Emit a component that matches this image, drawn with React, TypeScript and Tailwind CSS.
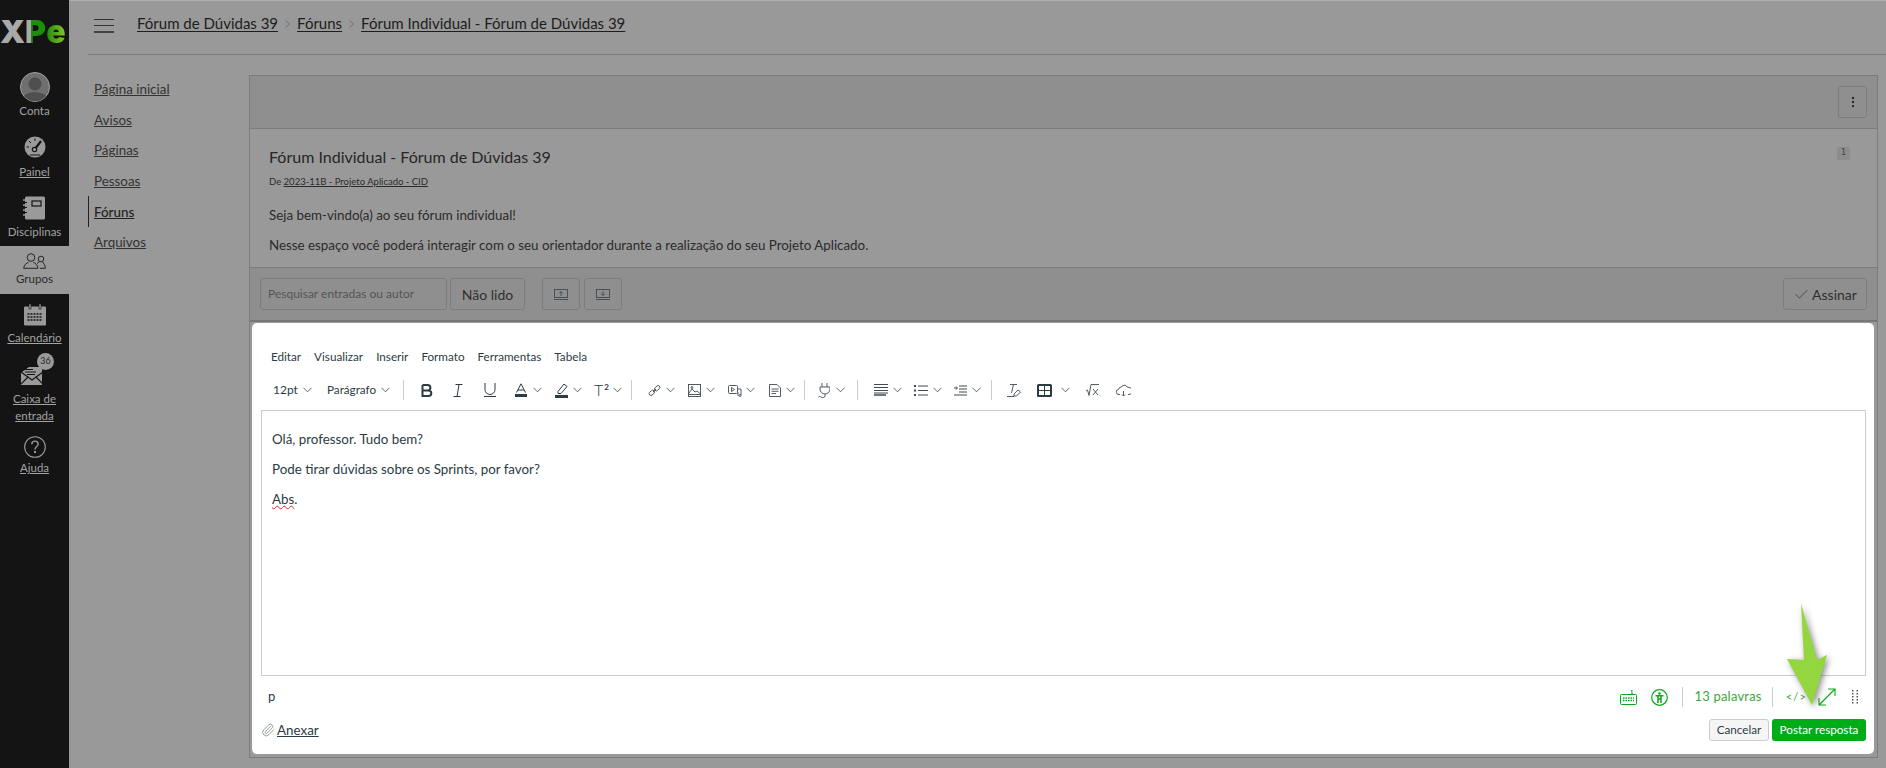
import React from "react";
import { Check, EllipsisVertical, Paperclip } from "lucide-react";

const Chevron = ({ className = "" }: { className?: string }) => (
  <svg width="9" height="6" viewBox="0 0 9 6" fill="none" stroke="#4a5560" strokeWidth="0.9" className={`shrink-0 ${className}`}>
    <path d="M0.5 0.8 L4.5 4.8 L8.5 0.8" />
  </svg>
);

const Sep = ({ className = "" }: { className?: string }) => <div className={`w-px h-5 shrink-0 bg-[#c7cdd1] ${className}`} />;

const Ico = ({ w = 16, h = 16, children, className = "", sw = 1 }: { w?: number; h?: number; children: React.ReactNode; className?: string; sw?: number }) => (
  <svg width={w} height={h} viewBox={`0 0 ${w} ${h}`} fill="none" stroke="#3f4a52" strokeWidth={sw} className={`shrink-0 ${className}`}>
    {children}
  </svg>
);

const Crumb = () => (
  <svg width="5" height="8" viewBox="0 0 5 8" fill="none" stroke="#666" strokeWidth="0.8" className="mx-[7px] mt-[2px]">
    <path d="M0.5 0.5 L4.3 4 L0.5 7.5" />
  </svg>
);

function NavIcon({ name }: { name: string }) {
  const c = "#9a9a9a";
  if (name === "painel")
    return (
      <svg width="22" height="22" viewBox="0 0 22 22">
        <circle cx="11" cy="11" r="10.5" fill={c} />
        <path d="M11 13 L17 5" stroke="#141414" strokeWidth="2.2" />
        <circle cx="10.5" cy="13.5" r="2.2" fill="#9a9a9a" stroke="#141414" strokeWidth="1.2" />
        <path d="M11 2.5v2.5M5 5l2 2M2.5 11h2.5M6 19h10" stroke="#141414" strokeWidth="1" />
      </svg>
    );
  if (name === "disciplinas")
    return (
      <svg width="23" height="24" viewBox="0 0 23 24">
        <rect x="2" y="0.5" width="20" height="23" rx="1.5" fill={c} />
        <rect x="9" y="5" width="9" height="5" fill={c} stroke="#141414" strokeWidth="1.2" />
        <path d="M0 4h4M0 9h4M0 14h4M0 19h4" stroke={c} strokeWidth="1.6" />
        <path d="M0 6.5h4M0 11.5h4M0 16.5h4" stroke="#141414" strokeWidth="1" />
      </svg>
    );
  if (name === "grupos")
    return (
      <svg width="23" height="16" viewBox="0 0 23 16" fill="none" stroke="#262626" strokeWidth="1">
        <circle cx="8" cy="4.5" r="3.8" />
        <path d="M0.7 15.3c0-3.5 3-5 4.8-6.2M15 15.3c0-3.5-3-5-4.8-6.2M0.7 15.3h14.3" />
        <circle cx="18" cy="6" r="2.8" />
        <path d="M14 10.5c1-1 2-1.3 2.5-1.8M22.3 15.3c0-3-1.6-5-2.8-6.5M17 15.3h5.3" />
      </svg>
    );
  if (name === "calendario")
    return (
      <svg width="22" height="22" viewBox="0 0 22 22">
        <rect x="0" y="2.5" width="22" height="19" rx="1" fill={c} />
        <rect x="5" y="0" width="2" height="5" fill={c} stroke="#141414" strokeWidth="0.6" />
        <rect x="15" y="0" width="2" height="5" fill={c} stroke="#141414" strokeWidth="0.6" />
        <path d="M3.5 10h15M3.5 13h15M3.5 16h15" stroke="#141414" strokeWidth="1.6" strokeDasharray="2 1" />
      </svg>
    );
  if (name === "caixa")
    return (
      <svg width="22" height="24" viewBox="0 0 22 24">
        <path d="M1 11 L8 6 H21 V24 H0 V11Z" fill={c} />
        <path d="M0 11 L11 19 L22 11M0 23 L7.5 15.5M22 23 L14.5 15.5" stroke="#141414" strokeWidth="1.2" fill="none" />
        <path d="M4 8.5h8M4 11h11M6 13.5h8" stroke="#141414" strokeWidth="1" />
      </svg>
    );
  return (
    <svg width="22" height="22" viewBox="0 0 22 22" fill="none" stroke={c} strokeWidth="1.1">
      <circle cx="11" cy="11" r="10.3" />
      <path d="M7.8 8.2c0-4 6.4-4 6.4-0.2 0 2.6-3.2 2.6-3.2 5.4" strokeWidth="1.4" />
      <circle cx="11" cy="16" r="0.6" fill={c} />
    </svg>
  );
}

function Sidebar() {
  return (
    <aside className="w-[69px] shrink-0 bg-[#141414] flex flex-col items-center text-[11.5px] leading-4 text-[#a3a3a3] h-[768px]">
      <div className="h-[66px] w-full pt-[13px] flex text-[32px] leading-[38px] font-black font-['Inter',sans-serif] overflow-hidden">
        <span className="text-[#a9a9a9] w-[25px] text-center shrink-0">X</span>
        <span className="bg-linear-to-r from-[#a9a9a9] from-30% to-[#1a8f0a] to-30% bg-clip-text text-transparent w-[21px] shrink-0">P</span>
        <span className="bg-linear-to-r from-[#128a08] to-[#86c62b] bg-clip-text text-transparent w-[20px] shrink-0 text-center">e</span>
      </div>
      <div className="h-[59px] w-full pt-[6px] flex flex-col items-center">
        <svg width="30" height="30" viewBox="0 0 30 30">
          <circle cx="15" cy="15" r="14.5" fill="#6f6f6f" stroke="#a3a3a3" />
          <circle cx="15" cy="12" r="6.5" fill="#4f4f4f" />
          <path d="M4 24c4-5 18-5 22 0a14 14 0 0 1-22 0Z" fill="#4f4f4f" />
        </svg>
        <span className="mt-[1px]">Conta</span>
      </div>
      <div className="h-[61px] w-full pt-[11px] flex flex-col items-center">
        <NavIcon name="painel" />
        <span className="mt-[6px] underline">Painel</span>
      </div>
      <div className="h-[60px] w-full pt-[10px] flex flex-col items-center">
        <NavIcon name="disciplinas" />
        <span className="mt-[4px]">Disciplinas</span>
      </div>
      <div className="h-[48px] w-full pt-[7px] flex flex-col items-center bg-[#999999] text-[#2a2a2a]">
        <NavIcon name="grupos" />
        <span className="mt-[2px]">Grupos</span>
      </div>
      <div className="h-[53px] w-full pt-[10px] flex flex-col items-center">
        <NavIcon name="calendario" />
        <span className="mt-[4px] underline">Calendário</span>
      </div>
      <div className="h-[80px] w-full pt-[6px] flex flex-col items-center relative">
        <div className="pt-[8px] pr-[5px]">
          <NavIcon name="caixa" />
        </div>
        <span className="absolute left-[37px] top-[6px] w-[17px] h-[17px] rounded-full bg-[#9a9a9a] text-[#262626] text-[9px] leading-[15px] text-center">
          36
        </span>
        <span className="mt-[5px] text-center leading-[17px] underline">
          Caixa de
          <br />
          entrada
        </span>
      </div>
      <div className="w-full pt-[9px] flex flex-col items-center">
        <NavIcon name="ajuda" />
        <span className="mt-[2px] underline">Ajuda</span>
      </div>
    </aside>
  );
}

function Header() {
  return (
    <header className="h-[54px] ml-[19px] border-b border-[#7c7c7c] flex items-start pt-[14px] text-[#1d1d1d]">
      <div className="w-[20px] ml-[6px] mt-[4px] flex flex-col gap-[5px]">
        <div className="h-px bg-[#333]" />
        <div className="h-px bg-[#333]" />
        <div className="h-[2px] bg-[#444]" />
      </div>
      <nav className="ml-[23px] flex items-center text-[15px] leading-4 underline underline-offset-2">
        <span>Fórum de Dúvidas 39</span>
        <Crumb />
        <span>Fóruns</span>
        <Crumb />
        <span>Fórum Individual - Fórum de Dúvidas 39</span>
      </nav>
    </header>
  );
}

function SectionNav() {
  const links = ["Página inicial", "Avisos", "Páginas", "Pessoas", "Fóruns", "Arquivos"];
  return (
    <nav className="w-[180px] shrink-0 pl-[20px] pt-[19px] flex flex-col text-[13.4px] leading-[20px] text-[#333]">
      {links.map((l) => (
        <span
          key={l}
          className={`h-[30.6px] flex items-center underline ${l === "Fóruns" ? "border-l border-[#222] -ml-[1px] pl-[5px] text-[#222] font-medium" : "pl-[5px]"}`}
        >
          {l}
        </span>
      ))}
    </nav>
  );
}

const GreyButton = ({ className = "", children }: { className?: string; children: React.ReactNode }) => (
  <div className={`h-[32px] border border-[#7d7d7d] rounded-[3px] flex items-center justify-center text-[#2f2f2f] ${className}`}>{children}</div>
);

function ForumIntro() {
  return (
    <>
      <div className="h-[53px] shrink-0 bg-[#8f8f8f] border-b border-[#7c7c7c] flex justify-end items-start pt-[10px] pr-[10px]">
        <GreyButton className="w-[29px]">
          <EllipsisVertical size={14} color="#2a2a2a" strokeWidth={2} />
        </GreyButton>
      </div>
      <div className="h-[138px] shrink-0 pl-[19px] pr-[27px] relative text-[#2b2b2b]">
        <h1 className="pt-[16px] text-[16px] leading-[24px] font-normal text-[#262626]">Fórum Individual - Fórum de Dúvidas 39</h1>
        <p className="mt-[6px] text-[9.5px] leading-[14px]">
          De <span className="underline">2023-11B - Projeto Aplicado - CID</span>
        </p>
        <p className="mt-[16px] text-[13.35px] leading-[20px]">Seja bem-vindo(a) ao seu fórum individual!</p>
        <p className="mt-[10px] text-[13.35px] leading-[20px]">Nesse espaço você poderá interagir com o seu orientador durante a realização do seu Projeto Aplicado.</p>
        <span className="absolute right-[27px] top-[18px] w-[13px] h-[13px] bg-[#8d8d8d] rounded-[2px] text-[8px] leading-[11px] text-center font-['DejaVu_Sans_Mono',monospace] text-[#3c3c3c]">
          1
        </span>
      </div>
      <div className="h-[55px] shrink-0 bg-[#8f8f8f] border-t border-b-2 border-t-[#7c7c7c] border-b-[#777] flex items-start pt-[10px] pl-[10px] pr-[10px]">
        <div className="w-[187px] h-[32px] border border-[#7d7d7d] rounded-[3px] flex items-center pl-[7px] text-[12px] text-[#555]">Pesquisar entradas ou autor</div>
        <GreyButton className="w-[75px] ml-[3px] text-[14px]">Não lido</GreyButton>
        <GreyButton className="w-[38px] ml-[17px]">
          <Ico w={14} h={11} sw={0.9}>
            <rect x="0.5" y="0.5" width="13" height="8" />
            <path d="M0 10.5h14M7 7V2.5M5 4.5l2-2 2 2" />
          </Ico>
        </GreyButton>
        <GreyButton className="w-[38px] ml-[4px]">
          <Ico w={14} h={11} sw={0.9}>
            <rect x="0.5" y="0.5" width="13" height="8" />
            <path d="M0 10.5h14M7 2v4.5M5 4.5l2 2 2-2" />
          </Ico>
        </GreyButton>
        <GreyButton className="w-[84px] ml-auto gap-[2px] text-[14px]">
          <Check size={17} color="#333" strokeWidth={1} />
          Assinar
        </GreyButton>
      </div>
    </>
  );
}

function EditorToolbar() {
  return (
    <div className="flex items-center h-[26px] pl-[12px] text-[12px] text-[#2d3b45]">
      <span className="w-[23px] shrink-0">12pt</span>
      <Chevron className="ml-[7px]" />
      <span className="w-[49px] ml-[15px] shrink-0 text-[11.7px]">Parágrafo</span>
      <Chevron className="ml-[5px]" />
      <Sep className="ml-[13px]" />
      <svg width="12" height="13" viewBox="0 0 12 13" className="ml-[17px] shrink-0" fill="none" stroke="#2d3b45" strokeWidth="2">
        <path d="M1.5 1h5.2a2.7 2.7 0 0 1 0 5.4H1.5M1.5 6.4h6a2.8 2.8 0 0 1 0 5.6h-6ZM1.5 1v11" />
      </svg>
      <svg width="10" height="13" viewBox="0 0 10 13" className="ml-[20px] shrink-0" fill="none" stroke="#2d3b45" strokeWidth="1">
        <path d="M2.5 0.5h7M0.5 12.5h7M6 0.5L4 12.5" />
      </svg>
      <svg width="12" height="14" viewBox="0 0 12 14" className="ml-[21px] shrink-0" fill="none" stroke="#2d3b45" strokeWidth="1">
        <path d="M1 0v6.5a5 5 0 0 0 10 0V0M0 13.5h12" />
      </svg>
      <svg width="12" height="15" viewBox="0 0 12 15" className="ml-[19px] shrink-0" fill="none" stroke="#2d3b45" strokeWidth="1">
        <path d="M1.5 9.5L6 0.8l4.5 8.7M3 7h6" />
        <path d="M0 12.5h12" strokeWidth="3" />
      </svg>
      <Chevron className="ml-[6px]" />
      <svg width="13" height="15" viewBox="0 0 13 15" className="ml-[13px] shrink-0" fill="none" stroke="#2d3b45" strokeWidth="1">
        <path d="M3 8.5L9 1l3 2.5L6 10.5H3Z" />
        <path d="M0 13.5h13" strokeWidth="3" />
      </svg>
      <Chevron className="ml-[5px]" />
      <span className="ml-[12px] w-[17px] shrink-0 flex items-start leading-none text-[16px] font-light">
        T<span className="text-[8px] font-bold mt-[1px] ml-[1px]">2</span>
      </span>
      <Chevron className="ml-[2px]" />
      <Sep className="ml-[9px]" />
      <Ico w={13} h={13} className="ml-[16px]" sw={0.9}>
        <rect x="0.8" y="7" width="6" height="3.6" rx="1.8" transform="rotate(-45 3.8 8.8)" />
        <rect x="6.2" y="2.4" width="6" height="3.6" rx="1.8" transform="rotate(-45 9.2 4.2)" />
        <path d="M5 8l3-3" />
      </Ico>
      <Chevron className="ml-[5px]" />
      <Ico w={13} h={13} className="ml-[13px]" sw={0.9}>
        <rect x="0.5" y="0.5" width="12" height="12" />
        <path d="M1 9l3-4 3 3 2-1 3 2.5M0.5 10.5h12" />
        <circle cx="4" cy="3.5" r="1" />
      </Ico>
      <Chevron className="ml-[5px]" />
      <Ico w={14} h={13} className="ml-[13px]" sw={0.9}>
        <rect x="0.5" y="1.5" width="9" height="8" rx="1" />
        <path d="M3.5 3.5v4l3-2ZM10 5h3v6M10 8v4" />
        <circle cx="12" cy="11.5" r="1" />
      </Ico>
      <Chevron className="ml-[4px]" />
      <Ico w={12} h={13} className="ml-[14px]" sw={0.9}>
        <path d="M0.5 0.5h7.5l3.5 3.5v8.5h-11ZM2.5 5h7M2.5 7.3h7M2.5 9.6h4.5" />
      </Ico>
      <Chevron className="ml-[5px]" />
      <Sep className="ml-[9px]" />
      <Ico w={12} h={15} className="ml-[13px]" sw={0.9}>
        <path d="M4 0v4M9 0v4M2 4h10v2a5 5 0 0 1-10 0ZM7 11v2a2 2 0 0 1-3 1.5C3 14 2 13 0.5 14" />
      </Ico>
      <Chevron className="ml-[6px]" />
      <Sep className="ml-[12px]" />
      <Ico w={14} h={12} className="ml-[16px]" sw={1}>
        <path d="M0 0.5h14M0 3.5h14M0 6.5h14M0 9h14" />
        <path d="M0 11h12" strokeWidth="1.5" />
      </Ico>
      <Chevron className="ml-[5px]" />
      <Ico w={14} h={11} className="ml-[12px]" sw={1}>
        <path d="M4 1h10M4 5.5h10M4 10h10" />
        <path d="M0 1h2M0 5.5h2M0 10h2" strokeWidth="2" />
      </Ico>
      <Chevron className="ml-[5px]" />
      <Ico w={13} h={11} className="ml-[12px]" sw={1}>
        <path d="M5 1h8M5 4h8M5 7h8M0 10h13M0 3h3M2 1.5L3.5 3 2 4.5" />
      </Ico>
      <Chevron className="ml-[5px]" />
      <Sep className="ml-[10px]" />
      <Ico w={14} h={13} className="ml-[15px]" sw={0.9}>
        <path d="M3 0.5h7M6.5 0.5L4.5 9M0 12.5h7" />
        <path d="M7 10l4-4 2.5 2-4 4H7Z" />
      </Ico>
      <svg width="15" height="13" viewBox="0 0 15 13" className="ml-[16px] shrink-0">
        <rect width="15" height="13" rx="1.5" fill="#2d3b45" />
        <rect x="2" y="2" width="5" height="4" fill="#fff" />
        <rect x="8" y="2" width="5" height="4" fill="#fff" />
        <rect x="2" y="7" width="5" height="4" fill="#fff" />
        <rect x="8" y="7" width="5" height="4" fill="#fff" />
      </svg>
      <Chevron className="ml-[9px]" />
      <Ico w={13} h={12} className="ml-[16px]" sw={0.9}>
        <path d="M0 7l1.5-1 1.5 5.5L5 0.5h8M7 5l5 6M12 5l-5 6" />
      </Ico>
      <Ico w={15} h={13} className="ml-[17px]" sw={0.9}>
        <path d="M4 10.5H3a2.5 2.5 0 0 1-.5-5 3 3 0 0 1 3-2.5 3 3 0 0 1 5.5 0 3 3 0 0 1 2 .5 2.5 2.5 0 0 1 0 7h-1M7.5 7v5M6 10.5l1.5 1.5 1.5-1.5" />
      </Ico>
    </div>
  );
}

function EditorStatus() {
  const g = "#09a81c";
  return (
    <div className="h-[36px] flex items-center pl-[7px] text-[13px]">
      <span className="text-[#2d3b45]">p</span>
      <svg width="17" height="15" viewBox="0 0 17 15" fill="none" stroke={g} className="ml-auto">
        <rect x="0.5" y="4.5" width="16" height="10" rx="1" />
        <path d="M12 4V1h-2M3 8h11M3 10.5h11" strokeDasharray="1.5 1" strokeWidth="1.4" />
      </svg>
      <svg width="17" height="17" viewBox="0 0 17 17" fill="none" stroke={g} className="ml-[14px]">
        <circle cx="8.5" cy="8.5" r="7.8" strokeWidth="1.2" />
        <circle cx="8.5" cy="4.5" r="1.3" fill={g} stroke="none" />
        <path d="M4.5 6.8h8M7 7v7M10 7v7M7 10h3" strokeWidth="1.5" />
      </svg>
      <div className="w-px h-5 bg-[#c7cdd1] ml-[14px]" />
      <span className="ml-[11px] text-[13px] tracking-[0.2px] text-[#3aa83a]">13 palavras</span>
      <div className="w-px h-5 bg-[#c7cdd1] ml-[10px]" />
      <span className="ml-[13px] text-[11px] tracking-[1.2px] text-[#3aa83a]">&lt;/&gt;</span>
      <svg width="18" height="18" viewBox="0 0 18 18" fill="none" stroke={g} strokeWidth="1.1" className="ml-[11px]">
        <path d="M1 17L17 1M10 1h7v7M1 10v7h7" />
      </svg>
      <svg width="6" height="14" viewBox="0 0 6 14" fill="#4b5660" className="ml-[16px] mr-[8px]">
        {[1, 4, 7, 10, 13].flatMap((y) => [<rect key={`a${y}`} x="0" y={y - 1} width="1.5" height="1.5" />, <rect key={`b${y}`} x="4.5" y={y - 1} width="1.5" height="1.5" />])}
      </svg>
    </div>
  );
}

function Editor() {
  return (
    <section className="flex-1 bg-white rounded-[5px] ml-[2px] mr-[3px] mt-[1px] mb-[3px] pl-[9px] pr-[8px] pt-[24px] font-['Lato',sans-serif]">
      <div className="h-[20px] flex items-center pl-[10px] text-[11.7px] text-[#2d3b45]">
        <span>Editar</span>
        <span className="ml-[13px]">Visualizar</span>
        <span className="ml-[13px]">Inserir</span>
        <span className="ml-[13px]">Formato</span>
        <span className="ml-[13px]">Ferramentas</span>
        <span className="ml-[13px]">Tabela</span>
      </div>
      <div className="mt-[10px]">
        <EditorToolbar />
      </div>
      <div className="mt-[7px] h-[266px] border border-[#c7cdd1] pl-[10px] pt-[18px] text-[13.35px] leading-[20px] text-[#2d3b45]">
        <p>Olá, professor. Tudo bem?</p>
        <p className="mt-[10px]">Pode tirar dúvidas sobre os Sprints, por favor?</p>
        <p className="mt-[10px]">
          <span className="underline decoration-wavy decoration-[#d62b2b] decoration-1">Abs</span>.
        </p>
      </div>
      <div className="mt-[3px]">
        <EditorStatus />
      </div>
      <div className="flex items-center h-[22px] mt-[4px]">
        <Paperclip size={14} color="#4a5560" strokeWidth={1} />
        <span className="ml-[2px] text-[13.4px] text-[#2d3b45] underline">Anexar</span>
        <button className="ml-auto h-[22px] w-[60px] bg-[#f5f5f5] border border-[#c7cdd1] rounded-[3px] text-[11.7px] text-[#2d3b45]">Cancelar</button>
        <button className="ml-[3px] h-[22px] w-[94px] bg-[#00ac18] rounded-[3px] text-[11.7px] text-white">Postar resposta</button>
      </div>
    </section>
  );
}

export default function App() {
  return (
    <div className="relative w-[1886px] h-[768px] overflow-hidden flex bg-[#999999] font-['Lato',sans-serif]">
      <Sidebar />
      <main className="flex-1 min-w-0 flex flex-col border-t border-[#b0b0b0]">
        <Header />
        <div className="flex flex-1 min-h-0">
          <SectionNav />
          <div className="flex-1 mt-[20px] mb-[10px] mr-[8px] border border-[#7c7c7c] flex flex-col">
            <ForumIntro />
            <Editor />
          </div>
        </div>
      </main>
      {/* callout pointing at the expand control */}
      <svg width="60" height="120" viewBox="0 0 60 120" className="absolute left-[1778px] top-[597px] drop-shadow-[2px_2px_3px_rgba(0,0,0,0.45)]">
        <path d="M23 6 L39 63 L49 58 L34 108 L9 62 L26 63 Z" fill="#93d63f" />
      </svg>
    </div>
  );
}
